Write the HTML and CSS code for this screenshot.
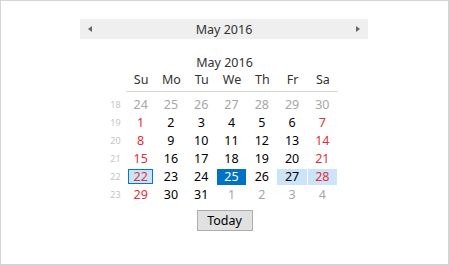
FILE: index.html
```html
<!DOCTYPE html>
<html lang="en">
<head>
    <meta charset="UTF-8">
    <title>Calendar</title>
    <link rel="stylesheet" href="styles.css">
</head>
<body>
    <div class="frame">
        <div class="nav">
            <span class="arrow left"></span>
            <span class="nav-title">May 2016</span>
            <span class="arrow right"></span>
        </div>

        <div class="calendar">
            <div class="month">May 2016</div>
            <div class="grid">
                <div class="wk"></div>
                <div class="dn">Su</div><div class="dn">Mo</div><div class="dn">Tu</div><div class="dn">We</div><div class="dn">Th</div><div class="dn">Fr</div><div class="dn">Sa</div>
            </div>
            <div class="grid days">
                <div class="wk">18</div>
                <div class="d other">24</div><div class="d other">25</div><div class="d other">26</div><div class="d other">27</div><div class="d other">28</div><div class="d other">29</div><div class="d other">30</div>

                <div class="wk">19</div>
                <div class="d red">1</div><div class="d">2</div><div class="d">3</div><div class="d">4</div><div class="d">5</div><div class="d">6</div><div class="d red">7</div>

                <div class="wk">20</div>
                <div class="d red">8</div><div class="d">9</div><div class="d">10</div><div class="d">11</div><div class="d">12</div><div class="d">13</div><div class="d red">14</div>

                <div class="wk">21</div>
                <div class="d red">15</div><div class="d">16</div><div class="d">17</div><div class="d">18</div><div class="d">19</div><div class="d">20</div><div class="d red">21</div>

                <div class="wk">22</div>
                <div class="d red today">22</div><div class="d">23</div><div class="d">24</div><div class="d selected">25</div><div class="d">26</div><div class="d hl">27</div><div class="d red hl">28</div>

                <div class="wk">23</div>
                <div class="d red">29</div><div class="d">30</div><div class="d">31</div><div class="d other">1</div><div class="d other">2</div><div class="d other">3</div><div class="d other">4</div>
            </div>
            <div class="footer">
                <button class="today-btn">Today</button>
            </div>
        </div>
    </div>
</body>
</html>
```

FILE: styles.css
```css
body {
    margin: 0;
    font-family: "Segoe UI", "Noto Sans", Arial, sans-serif;
    background: #fff;
}

.frame {
    width: 450px;
    height: 266px;
    box-sizing: border-box;
    border: 1px solid #d4d4d4;
    border-right-width: 2px;
    border-bottom-width: 2px;
    padding-top: 18px;
}

.nav {
    margin-left: 79px;
    width: 288px;
    height: 20px;
    background: #efefef;
    display: flex;
    align-items: center;
    justify-content: space-between;
    padding: 0 8px;
    box-sizing: border-box;
}

.nav-title {
    font-size: 12.5px;
    color: #333;
}

.arrow {
    width: 0;
    height: 0;
    border-top: 3.5px solid transparent;
    border-bottom: 3.5px solid transparent;
}

.arrow.left {
    border-right: 4px solid #666;
}

.arrow.right {
    border-left: 4px solid #666;
}

.calendar {
    margin-left: 104px;
    width: 233px;
    padding-top: 16px;
}

.month {
    text-align: center;
    font-size: 12.5px;
    color: #333;
    height: 16px;
    line-height: 16px;
    padding-left: 6px;
}

.grid {
    display: grid;
    grid-template-columns: 21px repeat(7, 1fr);
}

.dn {
    text-align: center;
    font-size: 12.5px;
    color: #333;
    height: 20px;
    line-height: 18px;
    border-bottom: 1px solid #d6d6d6;
}

.days {
    margin-top: 5px;
    row-gap: 2px;
}

.wk {
    text-align: center;
    font-size: 9px;
    color: #c4c4c4;
    line-height: 16px;
}

.d {
    text-align: center;
    font-size: 12.5px;
    color: #000;
    height: 16px;
    line-height: 16px;
    border-right: 1px solid transparent;
    background-clip: padding-box;
}

.d.other {
    color: #a6a6a6;
}

.d.red {
    color: #e0303a;
}

.d.hl {
    background-color: #cce4f7;
}

.d.selected {
    background-color: #0072c6;
    color: #fff;
}

.d.today {
    background-color: #cce4f7;
    box-sizing: border-box;
    border: 1px solid #0078d7;
    line-height: 14px;
    margin: 0 3px 1px 2px;
    height: 15px;
}

.footer {
    display: flex;
    justify-content: center;
    margin-top: 7px;
    padding-left: 6px;
}

.today-btn {
    font-family: inherit;
    font-size: 12.5px;
    color: #000;
    width: 56px;
    height: 21px;
    padding: 0;
    background: #e1e1e1;
    border: 1px solid #adadad;
    border-radius: 0;
}
```
